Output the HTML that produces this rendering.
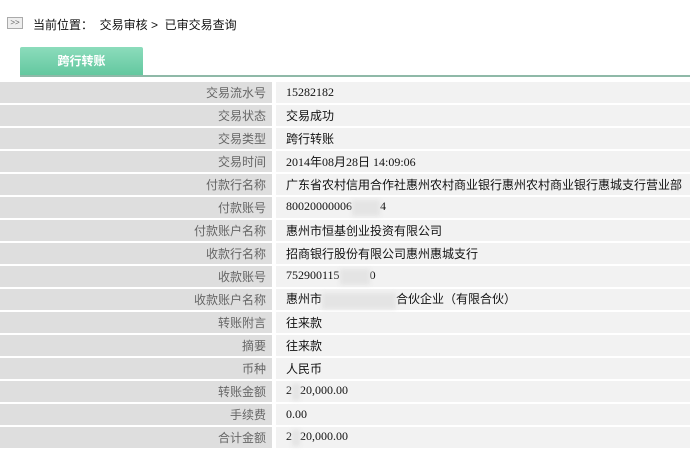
<!DOCTYPE html>
<html><head><meta charset="utf-8"><style>
body{margin:0;width:690px;height:450px;overflow:hidden;background:#fff;font-family:"Liberation Sans","Noto Sans CJK SC",sans-serif;font-size:12px;color:#222}
.hdr{position:absolute;left:0;top:0;width:690px;height:44px}
.ic{position:absolute;left:7px;top:17px;width:14px;height:10px;border:1px solid #aaa;background:#eee;font-size:8px;line-height:10px;text-align:center;color:#666}
.crumb{position:absolute;left:33px;top:16px;font-size:12px;color:#111}
.tab{position:absolute;left:20px;top:47px;width:123px;height:29px;background:linear-gradient(#8cdcbc,#62c79e);color:#fff;font-weight:bold;text-align:center;line-height:29px;font-size:12px;border-radius:2px 2px 0 0}
.line{position:absolute;left:20px;top:75px;width:670px;height:2px;background:#8fb9a8}
table{position:absolute;left:0;top:82px;border-collapse:collapse;width:690px}
td{height:21px;padding:0;border-bottom:2px solid #fff}
td.l{width:266px;background:#dedede;text-align:right;padding-right:6px;color:#666;border-right:4px solid #fff}
td.v{background:#f2f2f2;padding-left:10px;color:#111;font-family:"Liberation Serif","Noto Sans CJK SC",serif;font-size:12px}
.b{display:inline-block;background:#e4e4e4;height:16px;vertical-align:middle;filter:blur(2px)}
</style></head><body>
<div class="hdr"><div class="ic">&gt;&gt;</div><div class="crumb">当前位置：&nbsp; 交易审核 &gt;&nbsp; 已审交易查询</div></div>
<div class="tab">跨行转账</div><div class="line"></div>
<table>
<tr><td class="l">交易流水号</td><td class="v">15282182</td></tr>
<tr><td class="l">交易状态</td><td class="v">交易成功</td></tr>
<tr><td class="l">交易类型</td><td class="v">跨行转账</td></tr>
<tr><td class="l">交易时间</td><td class="v">2014年08月28日 14:09:06</td></tr>
<tr><td class="l">付款行名称</td><td class="v">广东省农村信用合作社惠州农村商业银行惠州农村商业银行惠城支行营业部</td></tr>
<tr><td class="l">付款账号</td><td class="v">80020000006<span class="b" style="width:28px"></span>4</td></tr>
<tr><td class="l">付款账户名称</td><td class="v">惠州市恒基创业投资有限公司</td></tr>
<tr><td class="l">收款行名称</td><td class="v">招商银行股份有限公司惠州惠城支行</td></tr>
<tr><td class="l">收款账号</td><td class="v">752900115<span class="b" style="width:30px"></span>0</td></tr>
<tr><td class="l">收款账户名称</td><td class="v">惠州市<span class="b" style="width:74px"></span>合伙企业（有限合伙）</td></tr>
<tr><td class="l">转账附言</td><td class="v">往来款</td></tr>
<tr><td class="l">摘要</td><td class="v">往来款</td></tr>
<tr><td class="l">币种</td><td class="v">人民币</td></tr>
<tr><td class="l">转账金额</td><td class="v">2<span class="b" style="width:8px"></span>20,000.00</td></tr>
<tr><td class="l">手续费</td><td class="v">0.00</td></tr>
<tr><td class="l">合计金额</td><td class="v">2<span class="b" style="width:8px"></span>20,000.00</td></tr>
</table>
</body></html>
